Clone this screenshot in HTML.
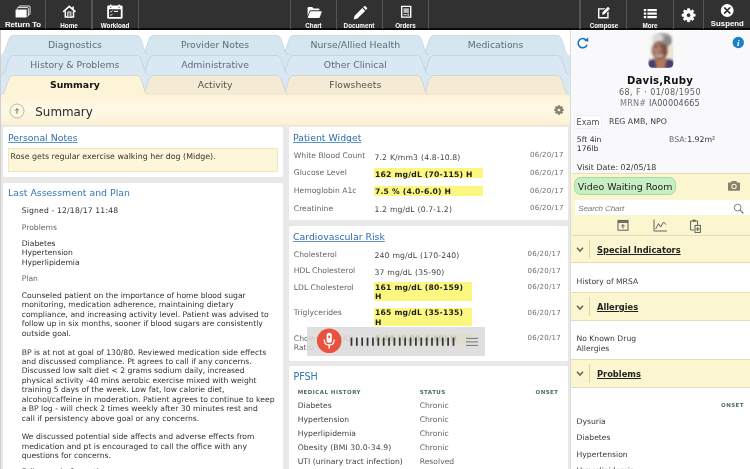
<!DOCTYPE html>
<html lang="en"><head><meta charset="utf-8"><title>Summary - Davis, Ruby</title>
<style>
html,body{margin:0;padding:0}
#root{position:absolute;left:0;top:0;width:750px;height:469px;overflow:hidden;will-change:transform}
body{width:750px;height:469px;overflow:hidden;position:relative;background:#e8e8e8;font-family:"DejaVu Sans","Liberation Sans",sans-serif;font-size:7.65px;color:#333}
.a{position:absolute}
.t{position:absolute;white-space:nowrap;line-height:10px;height:10px}
.card{position:absolute;background:#fff;border-radius:1.5px}
.lnk{color:#2c6dad;font-size:9.35px;text-decoration:underline;text-decoration-thickness:0.6px;text-underline-offset:1px;text-decoration-color:#5a96cf}
.hd{color:#2f78b7;font-size:9.35px}
.lab{color:#666}
.dt{color:#6e6e6e;font-size:7px;letter-spacing:0.27px;text-align:right}
.hl{position:absolute;background:#fcf781}
.b{font-weight:bold;letter-spacing:0.2px;color:#1c1c1c}
.v{font-size:7.7px;letter-spacing:0.13px;word-spacing:0.35px;color:#444}
#tb{position:absolute;left:0;top:0;width:750px;height:30.5px;background:linear-gradient(#313131 28.4px,#0a0a0a 28.4px);box-sizing:border-box}
.sep{position:absolute;top:0;width:1.3px;height:28.6px;background:#555;margin-left:-0.4px}
.tl{position:absolute;color:#fff;font-family:"Liberation Sans",sans-serif;font-weight:bold;font-size:6.3px;text-align:center;white-space:nowrap;line-height:8px}
.tl.big{font-size:7.8px}
.sh{position:absolute;left:571.4px;width:178.6px;background:#fbf6d0}
.sht{position:absolute;white-space:nowrap;font-weight:bold;font-size:8.3px;text-decoration:underline;text-decoration-thickness:0.9px;text-underline-offset:1.2px;color:#222;line-height:10px}
.sc{font-size:5.5px;font-weight:bold;letter-spacing:0.45px;color:#4d6a6a}
</style></head><body><div id="root">

<div id="tb">
<div class="sep" style="left:44.9px"></div>
<div class="sep" style="left:91.6px"></div>
<div class="sep" style="left:138.2px"></div>
<div class="sep" style="left:290.1px"></div>
<div class="sep" style="left:336.1px"></div>
<div class="sep" style="left:382px"></div>
<div class="sep" style="left:428.1px"></div>
<div class="sep" style="left:579.8px"></div>
<div class="sep" style="left:626.3px"></div>
<div class="sep" style="left:673px"></div>
<div class="sep" style="left:703.4px"></div>
<div class="tl big" style="left:-7px;width:60px;top:20.6px">Return To</div>
<div class="tl" style="left:39px;width:60px;top:21.9px">Home</div>
<div class="tl" style="left:85px;width:60px;top:21.9px">Workload</div>
<div class="tl" style="left:283.5px;width:60px;top:21.9px">Chart</div>
<div class="tl" style="left:329px;width:60px;top:21.9px">Document</div>
<div class="tl" style="left:375.5px;width:60px;top:21.9px">Orders</div>
<div class="tl" style="left:574px;width:60px;top:21.9px">Compose</div>
<div class="tl" style="left:620px;width:60px;top:21.9px">More</div>
<div class="tl big" style="left:697.3px;width:60px;top:19.7px">Suspend</div>
<svg class="a" style="left:0;top:0" width="750" height="30" viewBox="0 0 750 30">
<g fill="#fff" stroke="none">
<!-- return to: stacked pages -->
<rect x="19" y="6" width="11" height="8.6" rx="0.8" fill="#313131" stroke="#fff" stroke-width="0.9"/>
<rect x="17.3" y="7.6" width="11" height="8.6" rx="0.8" fill="#313131" stroke="#fff" stroke-width="0.9"/>
<rect x="15.3" y="9.2" width="11.6" height="8.6" rx="0.8" fill="#fff" stroke="#313131" stroke-width="0.5"/>
<!-- home -->
<path d="M63.2 11.9 L69.3 6.3 L75.5 11.9" fill="none" stroke="#fff" stroke-width="1.7" stroke-linejoin="miter"/>
<path d="M72.3 6.6 H73.9 V9.6 L72.3 8.2 Z"/>
<path d="M65.3 11.2 V16.9 H73.5 V11.2" fill="none" stroke="#fff" stroke-width="1.5"/>
<rect x="67.7" y="11.9" width="3.3" height="5.2" fill="#7a7a7a" stroke="#fff" stroke-width="0.8"/>
<!-- workload calendar -->
<path d="M108.4 5.6 H121.4 Q122.6 5.6 122.6 6.8 V17.6 Q122.6 18.8 121.4 18.8 H108.4 Q107.2 18.8 107.2 17.6 V6.8 Q107.2 5.6 108.4 5.6 Z M109 9.2 V17 H120.8 V9.2 Z" fill-rule="evenodd"/>
<rect x="109.9" y="4.4" width="1.7" height="3" rx="0.6"/><rect x="118.2" y="4.4" width="1.7" height="3" rx="0.6"/>
<circle cx="110.75" cy="7.2" r="0.6" fill="#313131"/><circle cx="119.05" cy="7.2" r="0.6" fill="#313131"/>
<path d="M110.2 11.4 L111 12.2 L112.5 10.4 M110.2 14.8 L111 15.6 L112.5 13.8" fill="none" stroke="#fff" stroke-width="0.8"/>
<rect x="114" y="10.8" width="4" height="1.1"/>
<!-- chart folder -->
<path d="M307.6 8 Q307.6 7 308.6 7 H312.2 L313.6 8.4 H318.6 Q319.4 8.4 319.4 9.2 V10.3 H310.6 Q309.8 10.3 309.5 11 L307.6 16 Z"/>
<path d="M310.9 11.2 H321.3 Q322 11.2 321.7 12 L319.8 17.3 Q319.5 18 318.8 18 H308.2 Q307.6 18 307.9 17.3 L309.9 11.9 Q310.2 11.2 310.9 11.2 Z"/>
<!-- document pencil -->
<path transform="translate(360.3 12.6) scale(0.9) translate(-360.6 -12.4)" d="M362.9 7.4 L366 10.5 L357.4 19 L353.2 20 L354.3 15.9 Z M363.8 6.5 L364.9 5.4 Q365.7 4.7 366.5 5.4 L368 6.9 Q368.7 7.7 368 8.5 L366.9 9.6 Z"/>
<!-- orders -->
<path d="M401 5.7 H411.4 V17.8 H401 Z M402.4 7.1 V16.4 H410 V7.1 Z" fill-rule="evenodd"/>
<rect x="403.5" y="8.3" width="5.4" height="4.6" fill="#bdbdbd"/>
<rect x="403.6" y="14" width="3" height="1.2" fill="#cfcfcf"/><rect x="407.4" y="13.6" width="1.6" height="2.2" fill="#cfcfcf"/>
<!-- compose -->
<path d="M598 8.2 H605.5 L604.1 9.6 H599.4 V17 H607.2 V12.6 L608.6 11.2 V18.4 H598 Z"/>
<path d="M608 6.8 L609.9 8.7 L604.4 14.2 L602 14.8 L602.6 12.3 Z"/>
<!-- more list -->
<rect x="643.8" y="9" width="2.4" height="2.2"/><rect x="647.4" y="9" width="9.4" height="2.2"/>
<rect x="643.8" y="12.5" width="2.4" height="2.2"/><rect x="647.4" y="12.5" width="9.4" height="2.2"/>
<rect x="643.8" y="16" width="2.4" height="2.2"/><rect x="647.4" y="16" width="9.4" height="2.2"/>
</g>

<path d="M693.46 14.03 L695.12 14.17 L695.12 16.23 L693.46 16.37 L692.86 17.81 L693.94 19.08 L692.48 20.54 L691.21 19.46 L689.77 20.06 L689.63 21.72 L687.57 21.72 L687.43 20.06 L685.99 19.46 L684.72 20.54 L683.26 19.08 L684.34 17.81 L683.74 16.37 L682.08 16.23 L682.08 14.17 L683.74 14.03 L684.34 12.59 L683.26 11.32 L684.72 9.86 L685.99 10.94 L687.43 10.34 L687.57 8.68 L689.63 8.68 L689.77 10.34 L691.21 10.94 L692.48 9.86 L693.94 11.32 L692.86 12.59 Z M690.90 15.20 A2.3 2.3 0 1 0 686.30 15.20 A2.3 2.3 0 1 0 690.90 15.20 Z" fill="#fff" fill-rule="evenodd" stroke="#fff" stroke-width="0.8" stroke-linejoin="round"/>
<circle cx="727.2" cy="10.5" r="6.4" fill="#fff"/>
<path d="M724.6 7.9 L729.8 13.1 M729.8 7.9 L724.6 13.1" stroke="#2d2d2d" stroke-width="1.5" stroke-linecap="round"/>
</svg></div>
<div class="a" style="left:0;top:30px;width:570.2px;height:66px;background:#fff"></div>
<svg class="a" style="left:0;top:30px" width="570.2" height="66" viewBox="0 30 570.2 66">
<path d="M421.25 55.5 C427.25 55.5 427.25 35.5 433.25 35.5 L557.75 35.5 C563.75 35.5 563.75 55.5 569.75 55.5 Z" fill="#d5e6f1"/>
<path d="M421.25 55.5 C427.25 55.5 427.25 35.5 433.25 35.5 L557.75 35.5 C563.75 35.5 563.75 55.5 569.75 55.5" fill="none" stroke="#8fa9bb" stroke-opacity="0.5" stroke-width="0.6"/>
<path d="M281.05 55.5 C287.05 55.5 287.05 35.5 293.05 35.5 L417.55 35.5 C423.55 35.5 423.55 55.5 429.55 55.5 Z" fill="#d5e6f1"/>
<path d="M281.05 55.5 C287.05 55.5 287.05 35.5 293.05 35.5 L417.55 35.5 C423.55 35.5 423.55 55.5 429.55 55.5" fill="none" stroke="#8fa9bb" stroke-opacity="0.5" stroke-width="0.6"/>
<path d="M140.85 55.5 C146.85 55.5 146.85 35.5 152.85 35.5 L277.35 35.5 C283.35 35.5 283.35 55.5 289.35 55.5 Z" fill="#d5e6f1"/>
<path d="M140.85 55.5 C146.85 55.5 146.85 35.5 152.85 35.5 L277.35 35.5 C283.35 35.5 283.35 55.5 289.35 55.5" fill="none" stroke="#8fa9bb" stroke-opacity="0.5" stroke-width="0.6"/>
<path d="M0.65 55.5 C6.65 55.5 6.65 35.5 12.65 35.5 L137.15 35.5 C143.15 35.5 143.15 55.5 149.15 55.5 Z" fill="#d5e6f1"/>
<path d="M0.65 55.5 C6.65 55.5 6.65 35.5 12.65 35.5 L137.15 35.5 C143.15 35.5 143.15 55.5 149.15 55.5" fill="none" stroke="#8fa9bb" stroke-opacity="0.5" stroke-width="0.6"/>
<rect x="0" y="55.2" width="570.2" height="20.6" fill="#d5e6f1"/>
<path d="M421.25 75.5 C427.25 75.5 427.25 55.5 433.25 55.5 L557.75 55.5 C563.75 55.5 563.75 75.5 569.75 75.5 Z" fill="#d9e8f3"/>
<path d="M421.25 75.5 C427.25 75.5 427.25 55.5 433.25 55.5 L557.75 55.5 C563.75 55.5 563.75 75.5 569.75 75.5" fill="none" stroke="#8fa9bb" stroke-opacity="0.5" stroke-width="0.6"/>
<path d="M281.05 75.5 C287.05 75.5 287.05 55.5 293.05 55.5 L417.55 55.5 C423.55 55.5 423.55 75.5 429.55 75.5 Z" fill="#d9e8f3"/>
<path d="M281.05 75.5 C287.05 75.5 287.05 55.5 293.05 55.5 L417.55 55.5 C423.55 55.5 423.55 75.5 429.55 75.5" fill="none" stroke="#8fa9bb" stroke-opacity="0.5" stroke-width="0.6"/>
<path d="M140.85 75.5 C146.85 75.5 146.85 55.5 152.85 55.5 L277.35 55.5 C283.35 55.5 283.35 75.5 289.35 75.5 Z" fill="#d9e8f3"/>
<path d="M140.85 75.5 C146.85 75.5 146.85 55.5 152.85 55.5 L277.35 55.5 C283.35 55.5 283.35 75.5 289.35 75.5" fill="none" stroke="#8fa9bb" stroke-opacity="0.5" stroke-width="0.6"/>
<path d="M0.65 75.5 C6.65 75.5 6.65 55.5 12.65 55.5 L137.15 55.5 C143.15 55.5 143.15 75.5 149.15 75.5 Z" fill="#d9e8f3"/>
<path d="M0.65 75.5 C6.65 75.5 6.65 55.5 12.65 55.5 L137.15 55.5 C143.15 55.5 143.15 75.5 149.15 75.5" fill="none" stroke="#8fa9bb" stroke-opacity="0.5" stroke-width="0.6"/>
<rect x="0" y="75.2" width="570.2" height="20.6" fill="#d9e8f3"/>
<path d="M421.25 95.5 C427.25 95.5 427.25 75.5 433.25 75.5 L557.75 75.5 C563.75 75.5 563.75 95.5 569.75 95.5 Z" fill="#f5ebd5"/>
<path d="M421.25 95.5 C427.25 95.5 427.25 75.5 433.25 75.5 L557.75 75.5 C563.75 75.5 563.75 95.5 569.75 95.5" fill="none" stroke="#8fa9bb" stroke-opacity="0.5" stroke-width="0.6"/>
<path d="M281.05 95.5 C287.05 95.5 287.05 75.5 293.05 75.5 L417.55 75.5 C423.55 75.5 423.55 95.5 429.55 95.5 Z" fill="#f5ebd5"/>
<path d="M281.05 95.5 C287.05 95.5 287.05 75.5 293.05 75.5 L417.55 75.5 C423.55 75.5 423.55 95.5 429.55 95.5" fill="none" stroke="#8fa9bb" stroke-opacity="0.5" stroke-width="0.6"/>
<path d="M140.85 95.5 C146.85 95.5 146.85 75.5 152.85 75.5 L277.35 75.5 C283.35 75.5 283.35 95.5 289.35 95.5 Z" fill="#f5ebd5"/>
<path d="M140.85 95.5 C146.85 95.5 146.85 75.5 152.85 75.5 L277.35 75.5 C283.35 75.5 283.35 95.5 289.35 95.5" fill="none" stroke="#8fa9bb" stroke-opacity="0.5" stroke-width="0.6"/>
<path d="M0.65 95.5 C6.65 95.5 6.65 75.5 12.65 75.5 L137.15 75.5 C143.15 75.5 143.15 95.5 149.15 95.5 Z" fill="#fdf3d6"/>
<path d="M0.65 95.5 C6.65 95.5 6.65 75.5 12.65 75.5 L137.15 75.5 C143.15 75.5 143.15 95.5 149.15 95.5" fill="none" stroke="#8fa9bb" stroke-opacity="0.5" stroke-width="0.6"/>
</svg>
<div class="t" style="left:4.9px;width:140px;text-align:center;top:40.0px;color:#5c6d7a;font-size:9.3px;">Diagnostics</div>
<div class="t" style="left:145.1px;width:140px;text-align:center;top:40.0px;color:#5c6d7a;font-size:9.3px;">Provider Notes</div>
<div class="t" style="left:285.3px;width:140px;text-align:center;top:40.0px;color:#5c6d7a;font-size:9.3px;">Nurse/Allied Health</div>
<div class="t" style="left:425.5px;width:140px;text-align:center;top:40.0px;color:#5c6d7a;font-size:9.3px;">Medications</div>
<div class="t" style="left:4.9px;width:140px;text-align:center;top:60.0px;color:#5c6d7a;font-size:9.3px;">History &amp; Problems</div>
<div class="t" style="left:145.1px;width:140px;text-align:center;top:60.0px;color:#5c6d7a;font-size:9.3px;">Administrative</div>
<div class="t" style="left:285.3px;width:140px;text-align:center;top:60.0px;color:#5c6d7a;font-size:9.3px;">Other Clinical</div>
<div class="t" style="left:4.9px;width:140px;text-align:center;top:80.0px;color:#151515;font-weight:bold;font-size:9.4px;">Summary</div>
<div class="t" style="left:145.1px;width:140px;text-align:center;top:80.0px;color:#55534e;font-size:9.3px;">Activity</div>
<div class="t" style="left:285.3px;width:140px;text-align:center;top:80.0px;color:#55534e;font-size:9.3px;">Flowsheets</div>
<div class="a" style="left:0;top:95px;width:570.2px;height:29.7px;background:linear-gradient(#fdf3d6,#fef8e6 48%,#fdf4da 84%,#faf0d2)"></div>
<div class="a" style="left:0;top:124.7px;width:570.2px;height:2.4px;background:linear-gradient(#e6e0cf,#f1f0ec)"></div>
<svg class="a" style="left:9.2px;top:103.1px" width="16" height="16" viewBox="0 0 16 16"><circle cx="8" cy="8" r="7" fill="#fdf7e6" stroke="#a39b84" stroke-width="0.7"/><path d="M8 10.7 V5.8 M6.2 7.5 L8 5.6 L9.8 7.5" fill="none" stroke="#716b5c" stroke-width="1"/></svg>
<div class="t" style="left:35.3px;top:104.5px;font-size:11.9px;line-height:14px;height:14px;color:#2a2a2a">Summary</div>
<svg class="a" style="left:553.4px;top:104.3px" width="12" height="12" viewBox="0 0 12 12"><path d="M9.31 5.21 L10.44 5.30 L10.44 6.70 L9.31 6.79 L8.90 7.78 L9.64 8.65 L8.65 9.64 L7.78 8.90 L6.79 9.31 L6.70 10.44 L5.30 10.44 L5.21 9.31 L4.22 8.90 L3.35 9.64 L2.36 8.65 L3.10 7.78 L2.69 6.79 L1.56 6.70 L1.56 5.30 L2.69 5.21 L3.10 4.22 L2.36 3.35 L3.35 2.36 L4.22 3.10 L5.21 2.69 L5.30 1.56 L6.70 1.56 L6.79 2.69 L7.78 3.10 L8.65 2.36 L9.64 3.35 L8.90 4.22 Z M7.80 6.00 A1.8 1.8 0 1 0 4.20 6.00 A1.8 1.8 0 1 0 7.80 6.00 Z" fill="#857f6e" fill-rule="evenodd" stroke="#857f6e" stroke-width="0.8" stroke-linejoin="round"/></svg>
<div class="a" style="left:0;top:30px;width:1px;height:439px;background:#cfcfcf"></div>
<div class="card" style="left:3px;top:127.1px;width:279.7px;height:49.9px"></div>
<div class="t lnk" style="left:8px;top:132.9px">Personal Notes</div>
<div class="a" style="left:8px;top:148px;width:270px;height:24px;background:#fdf6d8;border:0.6px solid #f0e6be;box-sizing:border-box"></div>
<div class="t" style="left:10.6px;top:151.9px;font-size:7.9px">Rose gets regular exercise walking her dog (Midge).</div>
<div class="card" style="left:3px;top:182.7px;width:279.7px;height:290px"></div>
<div class="t hd" style="left:8px;top:188.2px">Last Assessment and Plan</div>
<div class="t " style="left:21.7px;top:206.2px;letter-spacing:0.17px">Signed - 12/18/17 11:48</div>
<div class="t lab" style="left:21.7px;top:223.4px;">Problems</div>
<div class="t " style="left:21.7px;top:239.0px;">Diabetes</div>
<div class="t " style="left:21.7px;top:248.4px;">Hypertension</div>
<div class="t " style="left:21.7px;top:257.9px;">Hyperlipidemia</div>
<div class="t lab" style="left:21.7px;top:274.3px;">Plan</div>
<div class="t " style="left:21.7px;top:291.0px;">Counseled patient on the importance of home blood sugar</div>
<div class="t " style="left:21.7px;top:300.4px;">monitoring, medication adherence, maintaining dietary</div>
<div class="t " style="left:21.7px;top:309.8px;">compliance, and increasing activity level. Patient was advised to</div>
<div class="t " style="left:21.7px;top:319.3px;">follow up in six months, sooner if blood sugars are consistently</div>
<div class="t " style="left:21.7px;top:328.7px;">outside goal.</div>
<div class="t " style="left:21.7px;top:347.5px;">BP is at not at goal of 130/80. Reviewed medication side effects</div>
<div class="t " style="left:21.7px;top:356.9px;">and discussed compliance. Pt agrees to call if any concerns.</div>
<div class="t " style="left:21.7px;top:366.4px;">Discussed low salt diet &lt; 2 grams sodium daily, increased</div>
<div class="t " style="left:21.7px;top:375.8px;">physical activity -40 mins aerobic exercise mixed with weight</div>
<div class="t " style="left:21.7px;top:385.2px;">training 5 days of the week. Low fat, low calorie diet,</div>
<div class="t " style="left:21.7px;top:394.6px;">alcohol/caffeine in moderation. Patient agrees to continue to keep</div>
<div class="t " style="left:21.7px;top:404.0px;">a BP log - will check 2 times weekly after 30 minutes rest and</div>
<div class="t " style="left:21.7px;top:413.5px;">call if persistency above goal or any concerns.</div>
<div class="t " style="left:21.7px;top:432.3px;">We discussed potential side affects and adverse effects from</div>
<div class="t " style="left:21.7px;top:441.7px;">medication and pt is encouraged to call the office with any</div>
<div class="t " style="left:21.7px;top:451.1px;">questions for concerns.</div>
<div class="t " style="left:21.7px;top:466.8px;">Follow up in 6 months.</div>
<div class="card" style="left:288.6px;top:127.1px;width:279.7px;height:92.7px"></div>
<div class="t lnk" style="left:293px;top:132.9px">Patient Widget</div>
<div class="t lab" style="left:293.8px;top:151.0px">White Blood Count</div>
<div class="t dt" style="left:513.4px;width:50.27px;top:150.4px">06/20/17</div>
<div class="t lab" style="left:293.8px;top:168.3px">Glucose Level</div>
<div class="t dt" style="left:513.4px;width:50.27px;top:167.7px">06/20/17</div>
<div class="t lab" style="left:293.8px;top:186.2px">Hemoglobin A1c</div>
<div class="t dt" style="left:513.4px;width:50.27px;top:185.6px">06/20/17</div>
<div class="t lab" style="left:293.8px;top:203.6px">Creatinine</div>
<div class="t dt" style="left:513.4px;width:50.27px;top:203.0px">06/20/17</div>
<div class="t v" style="left:374.4px;top:152.6px;">7.2 K/mm3 (4.8-10.8)</div>
<div class="hl" style="left:374px;top:168.3px;width:108.8px;height:10px"></div>
<div class="t b" style="left:375px;top:169.7px;">162 mg/dL (70-115) H</div>
<div class="hl" style="left:374px;top:186px;width:108.8px;height:10px"></div>
<div class="t b" style="left:375px;top:187.4px;">7.5 % (4.0-6.0) H</div>
<div class="t v" style="left:374.4px;top:205.1px;">1.2 mg/dL (0.7-1.2)</div>
<div class="card" style="left:288.6px;top:226.2px;width:279.7px;height:134.6px"></div>
<div class="t lnk" style="left:293px;top:232px">Cardiovascular Risk</div>
<div class="t lab" style="left:293.8px;top:249.6px">Cholesterol</div>
<div class="t dt" style="left:510.79999999999995px;width:50.27px;top:249.0px">06/20/17</div>
<div class="t lab" style="left:293.8px;top:266.3px">HDL Cholesterol</div>
<div class="t dt" style="left:510.79999999999995px;width:50.27px;top:265.7px">06/20/17</div>
<div class="t lab" style="left:293.8px;top:282.8px">LDL Cholesterol</div>
<div class="t dt" style="left:510.79999999999995px;width:50.27px;top:282.2px">06/20/17</div>
<div class="t lab" style="left:293.8px;top:308.4px">Triglycerides</div>
<div class="t dt" style="left:510.79999999999995px;width:50.27px;top:307.8px">06/20/17</div>
<div class="t lab" style="left:293.8px;top:334.0px">Cholesterol/HDL</div>
<div class="t dt" style="left:510.79999999999995px;width:50.27px;top:333.4px">06/20/17</div>
<div class="t lab" style="left:293.8px;top:343.4px;">Ratio</div>
<div class="t v" style="left:374.4px;top:250.9px;">240 mg/dL (170-240)</div>
<div class="t v" style="left:374.4px;top:267.6px;">37 mg/dL (35-90)</div>
<div class="hl" style="left:374px;top:282px;width:98.3px;height:19px"></div>
<div class="t b" style="left:375px;top:282.9px;">161 mg/dL (80-159)</div>
<div class="t b" style="left:375px;top:292.2px;">H</div>
<div class="hl" style="left:374px;top:307.7px;width:98.3px;height:18.8px"></div>
<div class="t b" style="left:375px;top:308.4px;">165 mg/dL (35-135)</div>
<div class="t b" style="left:375px;top:317.8px;">H</div>
<div class="hl" style="left:374px;top:333.5px;width:98.3px;height:10px"></div>
<div class="t b" style="left:375px;top:334.2px;">6.49 (0.00-4.49) H</div>
<div class="a" style="left:306.7px;top:327.4px;width:178px;height:28.3px;background:rgba(218,218,218,0.86)"></div>
<svg class="a" style="left:306px;top:326px" width="180" height="31" viewBox="306 326 180 31">
<circle cx="329.2" cy="340.7" r="12.3" fill="#e9533e"/>
<rect x="326.6" y="332.8" width="5.2" height="10" rx="2.6" fill="#fff"/>
<path d="M324.2 339.4 Q324.2 345 329.2 345 Q334.2 345 334.2 339.4" fill="none" stroke="#fff" stroke-width="1.3"/>
<path d="M329.2 345 V348.4" stroke="#fff" stroke-width="1.5"/>
<rect x="328.3" y="335.6" width="1.8" height="2.4" fill="#e9533e"/>

<rect x="350.60" y="337.6" width="1.7" height="8.2" fill="#333"/>
<rect x="355.97" y="337.6" width="1.7" height="8.2" fill="#333"/>
<rect x="361.34" y="337.6" width="1.7" height="8.2" fill="#333"/>
<rect x="366.71" y="337.6" width="1.7" height="8.2" fill="#333"/>
<rect x="372.08" y="337.6" width="1.7" height="8.2" fill="#333"/>
<rect x="377.45" y="337.6" width="1.7" height="8.2" fill="#333"/>
<rect x="382.82" y="337.6" width="1.7" height="8.2" fill="#333"/>
<rect x="388.19" y="337.6" width="1.7" height="8.2" fill="#333"/>
<rect x="393.56" y="337.6" width="1.7" height="8.2" fill="#333"/>
<rect x="398.93" y="337.6" width="1.7" height="8.2" fill="#333"/>
<rect x="404.30" y="337.6" width="1.7" height="8.2" fill="#333"/>
<rect x="409.67" y="337.6" width="1.7" height="8.2" fill="#333"/>
<rect x="415.04" y="337.6" width="1.7" height="8.2" fill="#333"/>
<rect x="420.41" y="337.6" width="1.7" height="8.2" fill="#333"/>
<rect x="425.78" y="337.6" width="1.7" height="8.2" fill="#333"/>
<rect x="431.15" y="337.6" width="1.7" height="8.2" fill="#333"/>
<rect x="436.52" y="337.6" width="1.7" height="8.2" fill="#333"/>
<rect x="441.89" y="337.6" width="1.7" height="8.2" fill="#333"/>
<rect x="447.26" y="337.6" width="1.7" height="8.2" fill="#333"/>
<rect x="452.63" y="337.6" width="1.7" height="8.2" fill="#333"/>
<path d="M466 338.4 H478.2 M466 341.9 H478.2 M466 345.4 H478.2" stroke="#6a6a6a" stroke-width="0.9"/>
</svg>
<div class="card" style="left:288.6px;top:365.8px;width:279.7px;height:110px"></div>
<div class="t hd" style="left:293.4px;top:371.7px;font-size:9.6px">PFSH</div>
<div class="t sc" style="left:297.7px;top:386.7px">MEDICAL HISTORY</div>
<div class="t sc" style="left:419.7px;top:386.7px">STATUS</div>
<div class="t sc" style="left:508px;width:50.5px;text-align:right;top:386.7px">ONSET</div>
<div class="t " style="left:297.7px;top:400.5px;color:#444;letter-spacing:0.03px">Diabetes</div>
<div class="t lab" style="left:419.7px;top:400.5px;">Chronic</div>
<div class="t " style="left:297.7px;top:414.6px;color:#444;letter-spacing:0.03px">Hypertension</div>
<div class="t lab" style="left:419.7px;top:414.6px;">Chronic</div>
<div class="t " style="left:297.7px;top:428.5px;color:#444;letter-spacing:0.03px">Hyperlipidemia</div>
<div class="t lab" style="left:419.7px;top:428.5px;">Chronic</div>
<div class="t " style="left:297.7px;top:442.6px;color:#444;letter-spacing:0.12px">Obesity (BMI 30.0-34.9)</div>
<div class="t lab" style="left:419.7px;top:442.6px;">Chronic</div>
<div class="t " style="left:297.7px;top:456.6px;color:#444;letter-spacing:0.03px">UTI (urinary tract infection)</div>
<div class="t lab" style="left:419.7px;top:456.6px;">Resolved</div>
<div class="a" style="left:570.2px;top:30px;width:179.8px;height:439px;background:#fff"></div>
<div class="a" style="left:570.2px;top:30px;width:1.2px;height:439px;background:#dcdcdc"></div>
<div class="a" style="left:571.4px;top:30.5px;width:178.6px;height:142.5px;background:#f9f9fb"></div>
<svg class="a" style="left:572px;top:30px" width="178" height="40" viewBox="572 30 178 40">
<path d="M586.6 40.7 A4.6 4.6 0 1 0 587 44.9" fill="none" stroke="#1877c4" stroke-width="1.55"/>
<path d="M584.2 41.1 L588.4 41.7 L588.2 37.3 Z" fill="#1877c4"/>
<circle cx="738.3" cy="42.5" r="5.7" fill="#1b80c6"/>
<text x="738.2" y="45.7" text-anchor="middle" font-family="Liberation Serif, serif" font-style="italic" font-weight="bold" font-size="9.2" fill="#fff">i</text>
</svg>
<svg class="a" style="left:647.5px;top:32px" width="26" height="36.5" viewBox="0 0 26 36.5">
<defs><clipPath id="pc"><rect x="0.3" y="0.3" width="25.2" height="35.8" rx="4.5"/></clipPath>
<filter id="bl" x="-20%" y="-20%" width="140%" height="140%"><feGaussianBlur stdDeviation="1"/></filter></defs>
<g clip-path="url(#pc)"><g filter="url(#bl)">
<rect width="26" height="36.5" fill="#f6f4f1"/>
<rect x="19" y="14" width="7" height="14" fill="#efe5cf"/>
<ellipse cx="14.6" cy="8.4" rx="9.8" ry="8" fill="#adadae"/>
<ellipse cx="9.5" cy="7" rx="5" ry="5.5" fill="#d9d9da"/>
<ellipse cx="19.5" cy="8.5" rx="4" ry="5.5" fill="#8b8b8d"/>
<path d="M0 36.5 V29 Q3 26 8 27 L13 33 L18 27 Q23 26 26 29 V36.5 Z" fill="#4a3e70"/>
<path d="M7 27 L10 24 H16 L19 27 L16 36.5 H9 Z" fill="#b27a56"/>
<ellipse cx="11.6" cy="18.4" rx="8.2" ry="9.6" fill="#956756"/>
<ellipse cx="8.5" cy="17" rx="4" ry="6" fill="#ad7f6c"/>
<ellipse cx="17" cy="19" rx="2.6" ry="6.5" fill="#7b5243"/>
<path d="M7.5 23.2 Q11 25.6 14.6 22.8" stroke="#e9d9d0" stroke-width="1.1" fill="none"/>
<path d="M6 14.2 H9.6 M12.4 14.2 H16" stroke="#3d2a25" stroke-width="1"/>
</g></g></svg>
<div class="t b" style="left:590px;width:140px;text-align:center;top:74.9px;font-size:10.15px;line-height:12px;height:12px;color:#111">Davis,Ruby</div>
<div class="t" style="left:590px;width:140px;text-align:center;top:87.1px;font-size:8.1px;letter-spacing:0.42px;color:#5e5e5e">68, F &middot; 01/08/1950</div>
<div class="t" style="left:590px;width:140px;text-align:center;top:98.3px;font-size:8.1px;letter-spacing:0.18px;color:#555"><span style="color:#7a7a7a">MRN#</span> IA00004665</div>
<div class="a" style="left:573.6px;top:114.8px;width:28.6px;height:13.8px;background:#fff;border:0.6px solid #f0f0f3;box-sizing:border-box"></div>
<div class="t " style="left:576.6px;top:116.6px;font-size:8.1px;color:#4b4b55">Exam</div>
<div class="t " style="left:609px;top:117.3px;font-size:7.8px;color:#3a3a3a">REG AMB, NPO</div>
<div class="t " style="left:576.8px;top:134.5px;color:#333">5ft 4in</div>
<div class="t " style="left:576.8px;top:144.1px;color:#333">176lb</div>
<div class="t" style="left:669px;top:134.5px;font-size:7.8px;color:#333"><span style="color:#666">BSA:</span>1.92m&sup2;</div>
<div class="t " style="left:577px;top:163.2px;font-size:7.95px;color:#333">Visit Date: 02/05/18</div>
<div class="sh" style="top:173px;height:62.5px"></div>
<div class="a" style="left:572px;top:173px;width:178px;height:0.7px;background:#e3deb5"></div>
<div class="a" style="left:574px;top:177.3px;width:101.5px;height:17.6px;box-sizing:border-box;background:#c8eec4;border:0.7px solid #a3daa0;border-radius:6.5px"></div>
<div class="t " style="left:577.8px;top:181.9px;font-size:9.45px;color:#222">Video Waiting Room</div>
<svg class="a" style="left:727px;top:180px" width="14" height="12" viewBox="0 0 14 12"><path d="M1 3.2 Q1 2.4 1.8 2.4 H4 L4.8 1 H9.2 L10 2.4 H12.2 Q13 2.4 13 3.2 V10 Q13 10.8 12.2 10.8 H1.8 Q1 10.8 1 10 Z" fill="#85836f"/><circle cx="7" cy="6.4" r="2.7" fill="#fbf6cf"/><circle cx="7" cy="6.4" r="1.7" fill="#85836f"/></svg>
<div class="a" style="left:575px;top:200.2px;width:175px;height:15.3px;background:#fff"></div>
<div class="t" style="left:578.2px;top:204px;font-family:'Liberation Sans',sans-serif;font-style:italic;font-size:8.1px;letter-spacing:-0.15px;color:#777">Search Chart</div>
<svg class="a" style="left:732px;top:202px" width="13" height="13" viewBox="0 0 13 13"><circle cx="5.6" cy="5.6" r="3.4" fill="none" stroke="#757575" stroke-width="0.9"/><path d="M8.1 8.1 L11 11" stroke="#757575" stroke-width="1.2" stroke-linecap="round"/></svg>
<svg class="a" style="left:612px;top:218px" width="100" height="16" viewBox="612 218 100 16" fill="none" stroke="#505050" stroke-width="0.9">
<rect x="618" y="220.4" width="10" height="9.8"/><path d="M618 222 H628" stroke-width="1.6"/><path d="M623 228.6 V224.8 M621.2 226.4 L623 224.6 L624.8 226.4"/>
<path d="M654 219.6 V231 H667"/><path d="M655.6 229 L658.6 223.6 L660.6 227 L663.6 222 L666 224.6"/>
<path d="M690.6 221 H697.6 V225 M690.6 221 V230 H694"/><rect x="692.6" y="219.6" width="3" height="2" fill="#666" stroke="none"/><rect x="695" y="225.4" width="5.4" height="7"/><path d="M697.7 227 V231 M695.8 229 H699.6"/>
</svg>
<div class="sh" style="top:235.2px;height:28.1px;border-top:0.7px solid #e2ddb6;border-bottom:0.7px solid #e2ddb6;box-sizing:border-box"></div>
<svg class="a" style="left:575px;top:245.2px" width="10" height="9" viewBox="0 0 10 9"><path d="M2 2.8 L5 6 L8 2.8" fill="none" stroke="#66665e" stroke-width="1.6"/></svg>
<div class="a" style="left:588.6px;top:240.2px;width:0.7px;height:18.1px;background:#d9d4ae"></div>
<div class="sht" style="left:597px;top:244.7px">Special Indicators</div>
<div class="t " style="left:576.6px;top:277.0px;color:#3a3a3a">History of MRSA</div>
<div class="sh" style="top:292.4px;height:28.7px;border-top:0.7px solid #e2ddb6;border-bottom:0.7px solid #e2ddb6;box-sizing:border-box"></div>
<svg class="a" style="left:575px;top:302.8px" width="10" height="9" viewBox="0 0 10 9"><path d="M2 2.8 L5 6 L8 2.8" fill="none" stroke="#66665e" stroke-width="1.6"/></svg>
<div class="a" style="left:588.6px;top:297.4px;width:0.7px;height:18.7px;background:#d9d4ae"></div>
<div class="sht" style="left:597px;top:302.1px">Allergies</div>
<div class="t " style="left:576.5px;top:334.2px;color:#3a3a3a">No Known Drug</div>
<div class="t " style="left:576.5px;top:343.6px;color:#3a3a3a">Allergies</div>
<div class="sh" style="top:358.7px;height:28.9px;border-top:0.7px solid #e2ddb6;border-bottom:0.7px solid #e2ddb6;box-sizing:border-box"></div>
<svg class="a" style="left:575px;top:369.1px" width="10" height="9" viewBox="0 0 10 9"><path d="M2 2.8 L5 6 L8 2.8" fill="none" stroke="#66665e" stroke-width="1.6"/></svg>
<div class="a" style="left:588.6px;top:363.7px;width:0.7px;height:18.9px;background:#d9d4ae"></div>
<div class="sht" style="left:597px;top:368.5px">Problems</div>
<div class="t sc" style="left:694px;width:50px;text-align:right;top:400px">ONSET</div>
<div class="t " style="left:576.6px;top:417.2px;color:#3a3a3a">Dysuria</div>
<div class="t " style="left:576.6px;top:433.2px;color:#3a3a3a">Diabetes</div>
<div class="t " style="left:576.6px;top:449.6px;color:#3a3a3a">Hypertension</div>
<div class="t " style="left:576.6px;top:465.6px;color:#3a3a3a">Hyperlipidemia</div>
</div></body></html>
